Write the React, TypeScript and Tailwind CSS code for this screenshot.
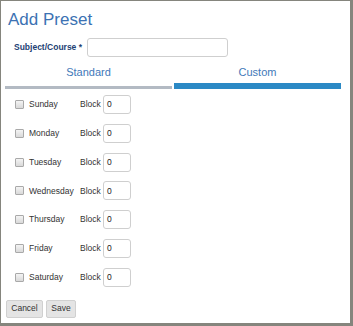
import React from "react";

const days = ["Sunday", "Monday", "Tuesday", "Wednesday", "Thursday", "Friday", "Saturday"];

function Box() {
  return (
    <span className="block w-[9px] h-[9px] border border-[#a9a9a9] rounded-[1px] bg-gradient-to-b from-[#f4f4f4] to-[#d9d9d9]" />
  );
}

export default function App() {
  return (
    <div
      className="w-[353px] h-[326px] bg-[#85857d] pt-px pl-px pr-[3px] pb-[3px]"
      style={{ fontFamily: '"Liberation Sans", Arial, sans-serif' }}
    >
      <div className="h-full bg-white relative flex flex-col">
        <div className="pl-[7px] pt-[9px] text-[17px] leading-[20px] text-[#3c72b3]">Add Preset</div>
        <div className="flex items-center mt-[8px] h-[19px]">
          <span className="ml-[13px] w-[73px] text-[8.5px] font-bold text-[#1d3f74]">Subject/Course *</span>
          <div className="w-[141px] h-[19px] border border-[#cfcfcf] rounded-[3px] bg-white" />
        </div>
        <div className="ml-[4px] w-[336px] grid grid-cols-2 gap-[2px] mt-[7px]">
          <div className="flex flex-col items-center">
            <div className="text-[11px] leading-[14px] text-[#3f79b9] h-[19px] pt-[1px]">Standard</div>
            <div className="w-full h-[3px] bg-[#b3bac3] mt-[3px]" />
          </div>
          <div className="flex flex-col items-center">
            <div className="text-[11px] leading-[14px] text-[#3f79b9] h-[19px] pt-[1px]">Custom</div>
            <div className="w-full h-[6px] bg-[#2b89c5]" />
          </div>
        </div>
        <div className="flex flex-col gap-[9.8px] mt-[6px]">
          {days.map((d) => (
            <div key={d} className="flex items-center h-[19px]">
              <span className="ml-[14px]">
                <Box />
              </span>
              <span className="ml-[5px] w-[51px] text-[8.5px] text-[#333]">{d}</span>
              <span className="w-[23px] text-[8.5px] text-[#333]">Block</span>
              <div className="w-[28px] h-[19px] border border-[#cfcfcf] rounded-[3px] bg-white flex items-center pl-[3px] text-[8.5px] text-[#222]">
                0
              </div>
            </div>
          ))}
        </div>
        <div className="flex gap-[3px] ml-[5px] mt-[13px]">
          <div className="w-[37px] h-[18px] bg-[#e4e4e4] border border-[#d0d0d0] rounded-[2px] flex items-center justify-center text-[8.5px] text-[#333]">
            Cancel
          </div>
          <div className="w-[30px] h-[18px] bg-[#e4e4e4] border border-[#d0d0d0] rounded-[2px] flex items-center justify-center text-[8.5px] text-[#333]">
            Save
          </div>
        </div>
      </div>
    </div>
  );
}
